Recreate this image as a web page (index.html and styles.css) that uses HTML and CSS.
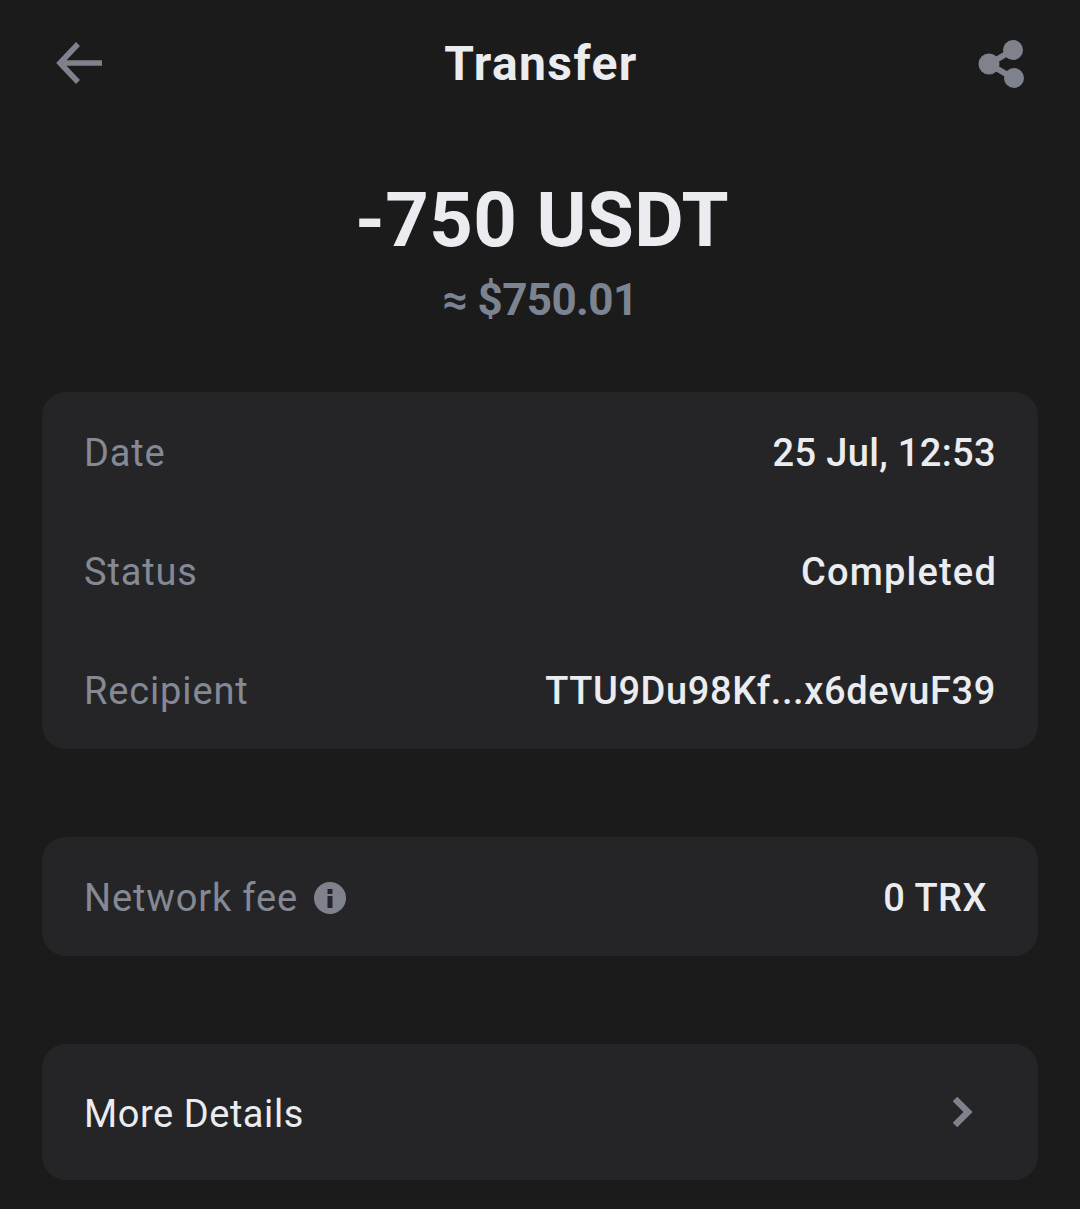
FILE: index.html
```html
<!DOCTYPE html>
<html>
<head>
    <meta charset="UTF-8">
    <title>Transfer</title>
    <link rel="stylesheet" href="styles.css">
</head>
<body>
    <header class="topbar">
        <svg class="back" width="48" height="48" viewBox="0 0 48 48">
            <path d="M23 4 L5 23 L23 42 M5 23 H47" fill="none" stroke="#7f828d" stroke-width="5.5"/>
        </svg>
        <h1>Transfer</h1>
        <svg class="share" width="48" height="50" viewBox="0 0 48 50">
            <path d="M36 11 L12 25 L36 39" fill="none" stroke="#7f828d" stroke-width="6"/>
            <circle cx="36" cy="11" r="10" fill="#7f828d"/>
            <circle cx="12" cy="25" r="10.5" fill="#7f828d"/>
            <circle cx="37" cy="39" r="10" fill="#7f828d"/>
        </svg>
    </header>

    <section class="amount">
        <div class="amount-main">-750 USDT</div>
        <div class="amount-fiat">≈ $750.01</div>
    </section>

    <section class="card card-info">
        <div class="row">
            <span class="label">Date</span>
            <span class="value value-date">25 Jul, 12:53</span>
        </div>
        <div class="row">
            <span class="label">Status</span>
            <span class="value value-status">Completed</span>
        </div>
        <div class="row">
            <span class="label">Recipient</span>
            <span class="value value-address">TTU9Du98Kf...x6devuF39</span>
        </div>
    </section>

    <section class="card card-fee">
        <div class="row">
            <span class="label label-icon">Network fee
                <svg width="32" height="32" viewBox="0 0 32 32">
                    <circle cx="16" cy="16" r="16" fill="#7f828d"/>
                    <rect x="13.5" y="7" width="5" height="5" fill="#252528"/>
                    <rect x="13.5" y="14" width="5" height="12" fill="#252528"/>
                </svg>
            </span>
            <span class="value value-fee">0 TRX</span>
        </div>
    </section>

    <section class="card card-more">
        <div class="row">
            <span class="more">More Details</span>
            <svg class="chevron" width="24" height="32" viewBox="0 0 24 32">
                <path d="M3 3 L16 16 L3 29" fill="none" stroke="#7f828d" stroke-width="6.5"/>
            </svg>
        </div>
    </section>
</body>
</html>
```

FILE: styles.css
```css
html, body {
    margin: 0;
    padding: 0;
}
body {
    background-color: #1b1b1c;
    color: #eaecef;
    font-family: Roboto, "Liberation Sans", sans-serif;
    height: 1209px;
    overflow: hidden;
}
.topbar {
    display: flex;
    align-items: center;
    justify-content: space-between;
    height: 50px;
    padding: 39px 55px 0 55px;
}
.topbar h1 {
    margin: 0 0 0 2px;
    font-size: 48px;
    font-weight: 700;
    line-height: 50px;
    letter-spacing: 1.4px;
}
.amount {
    text-align: center;
    margin-top: 87px;
}
.amount-main {
    font-size: 76px;
    font-weight: 700;
    line-height: 88px;
    color: #eaecef;
    letter-spacing: 0.4px;
    padding-left: 4px;
}
.amount-fiat {
    font-size: 44px;
    font-weight: 700;
    line-height: 50px;
    color: #7c8491;
    margin-top: 11px;
    letter-spacing: -0.6px;
}
.card {
    background-color: #252528;
    border-radius: 24px;
    margin: 0 42px;
    padding: 0 42px;
}
.card-info {
    margin-top: 67px;
    height: 357px;
}
.card-fee {
    margin-top: 88px;
    height: 119px;
}
.card-more {
    margin-top: 88px;
    height: 136px;
}
.row {
    display: flex;
    align-items: center;
    justify-content: space-between;
    height: 117px;
    padding-top: 2px;
}
.card-more .row {
    height: 136px;
    padding-top: 0;
    padding-right: 20px;
}
.label {
    font-size: 38px;
    color: #848994;
    letter-spacing: 0.85px;
}
.label-icon {
    display: flex;
    align-items: center;
    gap: 16px;
}
.value {
    font-size: 38px;
    font-weight: 500;
    color: #eaecef;
    letter-spacing: 0.5px;
}
.value-date {
    letter-spacing: 0.35px;
}
.value-status {
    letter-spacing: 1.2px;
    margin-right: -1px;
}
.value-address {
    letter-spacing: 0.6px;
}
.value-fee {
    margin-right: 9px;
}
.more {
    font-size: 38px;
    color: #eaecef;
    letter-spacing: 0.55px;
    padding-top: 4px;
}
```
